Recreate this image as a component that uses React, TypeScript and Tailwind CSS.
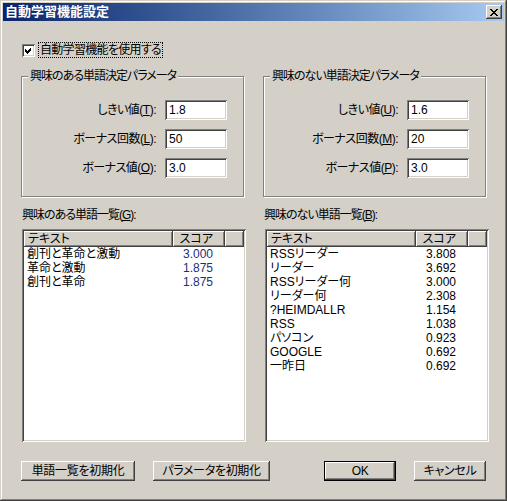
import React from "react";

const leftRows: [string, string][] = [
  ["創刊と革命と激動", "3.000"],
  ["革命と激動", "1.875"],
  ["創刊と革命", "1.875"],
];

const rightRows: [string, string][] = [
  ["RSSリーダー", "3.808"],
  ["リーダー", "3.692"],
  ["RSSリーダー何", "3.000"],
  ["リーダー何", "2.308"],
  ["?HEIMDALLR", "1.154"],
  ["RSS", "1.038"],
  ["パソコン", "0.923"],
  ["GOOGLE", "0.692"],
  ["一昨日", "0.692"],
];

const raised =
  "shadow-[inset_-1px_-1px_0_#404040,inset_1px_1px_0_#ffffff,inset_-2px_-2px_0_#808080]";
const sunken =
  "shadow-[inset_1px_1px_0_#808080,inset_-1px_-1px_0_#ffffff,inset_2px_2px_0_#404040,inset_-2px_-2px_0_#d4d0c8]";

function Field({ label, keyChar, value }: { label: string; keyChar: string; value: string }) {
  return (
    <div className="flex items-center h-[20px] gap-[9px]">
      <div className="w-[134px] text-right leading-[14px] tracking-[-0.5px]">
        {label}(<u>{keyChar}</u>):
      </div>
      <div className={`w-[62px] h-[20px] bg-white pl-[4px] flex items-center ${sunken}`}>{value}</div>
    </div>
  );
}

function ParamGroup({
  title,
  fields,
}: {
  title: string;
  fields: { label: string; keyChar: string; value: string }[];
}) {
  return (
    <div className="relative w-[224px] h-[121px] border border-[#808080] shadow-[inset_1px_1px_0_#ffffff,1px_1px_0_#ffffff]">
      <div className="absolute left-[6px] top-[-8px] px-[2px] bg-[#d4d0c8] leading-[15px] tracking-[-1px]">
        {title}
      </div>
      <div className="flex flex-col gap-[9px] pt-[23px]">
        {fields.map((f) => (
          <Field key={f.keyChar} {...f} />
        ))}
      </div>
    </div>
  );
}

function WordList({ rows, scoreColor }: { rows: [string, string][]; scoreColor: string }) {
  return (
    <div className={`w-[224px] h-[213px] bg-white p-[2px] flex flex-col ${sunken}`}>
      <div className="flex h-[16px] bg-[#d4d0c8] leading-[14px]">
        <div className={`w-[149px] pl-[4px] pt-[1px] ${raised}`}>テキスト</div>
        <div className={`w-[52px] pr-[12px] pt-[1px] text-right ${raised}`}>スコア</div>
        <div className={`flex-1 ${raised}`} />
      </div>
      {rows.map(([t, s], i) => (
        <div key={i} className="flex h-[14px] leading-[14px]">
          <div className="w-[149px] pl-[3px]">{t}</div>
          <div className={`w-[52px] pr-[12px] text-right ${scoreColor}`}>{s}</div>
        </div>
      ))}
    </div>
  );
}

function Button({ children, width, isDefault }: { children: React.ReactNode; width: string; isDefault?: boolean }) {
  return (
    <div className={`${width} h-[20px] ${isDefault ? "border border-black" : ""}`}>
      <div className={`w-full h-full flex items-center justify-center leading-[14px] tracking-[-0.3px] ${raised}`}>
        {children}
      </div>
    </div>
  );
}

export default function App() {
  return (
    <div className="w-[507px] h-[501px] bg-[#d4d0c8] p-[3px] flex flex-col text-[12px] text-black [font-family:'Liberation_Sans','Noto_Sans_CJK_JP',sans-serif] [font-feature-settings:'palt'] shadow-[inset_-1px_-1px_0_#404040,inset_1px_1px_0_#d4d0c8,inset_-2px_-2px_0_#808080,inset_2px_2px_0_#ffffff]">
      {/* title bar */}
      <div className="h-[18px] flex items-center justify-between pl-[2px] pr-[2px] bg-gradient-to-r from-[#0a246a] to-[#a6caf0]">
        <span className="text-white font-bold text-[13px] leading-[18px]">自動学習機能設定</span>
        <div className={`w-[16px] h-[14px] bg-[#d4d0c8] flex items-center justify-center ${raised}`}>
          <svg width="8" height="7" viewBox="0 0 8 7" shapeRendering="crispEdges">
            <path d="M0 0h2v1h-2zM6 0h2v1h-2zM1 1h2v1h-2zM5 1h2v1h-2zM2 2h4v1h-4zM3 3h2v1h-2zM2 4h4v1h-4zM1 5h2v1h-2zM5 5h2v1h-2zM0 6h2v1h-2zM6 6h2v1h-2z" fill="#000" />
          </svg>
        </div>
      </div>

      <div className="flex flex-col px-[18px]">
        {/* checkbox */}
        <div className="flex items-center mt-[21px] h-[16px] ml-[1px]">
          <div className={`w-[13px] h-[13px] bg-white flex items-center justify-center ${sunken}`}>
            <svg width="7" height="7" viewBox="0 0 7 7" shapeRendering="crispEdges">
              <path d="M6 0v3l-4 4h-0l-2-2v-3l2 2z" fill="#000" />
            </svg>
          </div>
          <div className="ml-[3px] px-[1px] h-[16px] leading-[14px] border border-dotted border-black tracking-[-0.7px]">
            自動学習機能を使用する
          </div>
        </div>

        {/* parameter groups */}
        <div className="flex gap-[19px] mt-[18px]">
          <ParamGroup
            title="興味のある単語決定パラメータ"
            fields={[
              { label: "しきい値", keyChar: "T", value: "1.8" },
              { label: "ボーナス回数", keyChar: "L", value: "50" },
              { label: "ボーナス値", keyChar: "O", value: "3.0" },
            ]}
          />
          <ParamGroup
            title="興味のない単語決定パラメータ"
            fields={[
              { label: "しきい値", keyChar: "U", value: "1.6" },
              { label: "ボーナス回数", keyChar: "M", value: "20" },
              { label: "ボーナス値", keyChar: "P", value: "3.0" },
            ]}
          />
        </div>

        {/* lists */}
        <div className="flex gap-[19px] mt-[11px] ml-[1px]">
          <div className="flex flex-col">
            <div className="h-[15px] leading-[15px] tracking-[-1px]">
              興味のある単語一覧(<u>G</u>):
            </div>
            <div className="mt-[6px]">
              <WordList rows={leftRows} scoreColor="text-[#1a2f7a]" />
            </div>
          </div>
          <div className="flex flex-col">
            <div className="h-[15px] leading-[15px] ml-[-1px] tracking-[-1px]">
              興味のない単語一覧(<u>B</u>):
            </div>
            <div className="mt-[6px]">
              <WordList rows={rightRows} scoreColor="text-black" />
            </div>
          </div>
        </div>

        {/* buttons */}
        <div className="flex mt-[19px]">
          <Button width="w-[117px]">単語一覧を初期化</Button>
          <div className="ml-[18px]">
            <Button width="w-[117px]">パラメータを初期化</Button>
          </div>
          <div className="ml-[54px]">
            <Button width="w-[72px]" isDefault>
              OK
            </Button>
          </div>
          <div className="ml-[18px]">
            <Button width="w-[72px]">キャンセル</Button>
          </div>
        </div>
      </div>
    </div>
  );
}
